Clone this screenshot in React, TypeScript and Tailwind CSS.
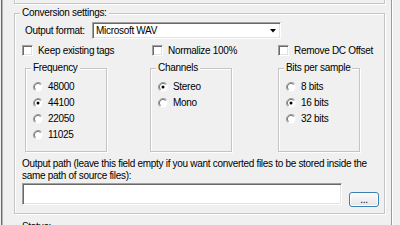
import React from 'react';

// Classic Win32 look: etched group boxes, sunken edits, 3D radios
const etched = 'border border-[#c4c4c4] shadow-[inset_1px_1px_0_#fff,1px_1px_0_#fff]';
const sunken =
  'border border-t-[#a0a0a0] border-l-[#a0a0a0] border-r-white border-b-white shadow-[inset_1px_1px_0_#696969,inset_-1px_-1px_0_#e3e3e3] bg-white';

function GroupLabel({ text }: { text: string }) {
  return (
    <div className="-mt-[7px] ml-[5px] self-start bg-[#f0f0f0] px-[2px] leading-[12px]">{text}</div>
  );
}

function Radio({ checked = false }: { checked?: boolean }) {
  return (
    <svg width="10" height="10" viewBox="0 0 10 10" className="shrink-0">
      <circle cx="5" cy="5" r="4.5" fill="#fff" />
      <path d="M8.5 1.8 A4.5 4.5 0 0 0 1.8 8.5" stroke="#a0a0a0" fill="none" />
      <path d="M7.6 2.4 A3.5 3.5 0 0 0 2.4 7.6" stroke="#696969" fill="none" />
      {checked && <circle cx="5" cy="5" r="1.5" fill="#000" />}
    </svg>
  );
}

function RadioRow({ label, checked }: { label: string; checked?: boolean }) {
  return (
    <div className="flex h-[16px] items-center gap-[5px] pl-[7px]">
      <Radio checked={checked} />
      <span className="leading-[12px]">{label}</span>
    </div>
  );
}

function Check({ label, width }: { label: string; width: string }) {
  return (
    <div className={`flex h-[11px] items-center gap-[5px] ${width}`}>
      <div className={`h-[11px] w-[11px] shrink-0 ${sunken}`} />
      <span className="leading-[12px]">{label}</span>
    </div>
  );
}

function OptionGroup({
  title,
  options,
  selected,
  className = '',
}: {
  title: string;
  options: string[];
  selected: string;
  className?: string;
}) {
  return (
    <div className={`flex h-[84px] w-[82px] flex-col ${etched} ${className}`}>
      <GroupLabel text={title} />
      <div className="mt-[5px] flex flex-col">
        {options.map((o) => (
          <RadioRow key={o} label={o} checked={o === selected} />
        ))}
      </div>
    </div>
  );
}

export default function App() {
  return (
    <div className="flex h-[225px] w-[400px] overflow-hidden bg-[#f0f0f0] font-['Liberation_Sans',Arial,sans-serif] text-[10px] tracking-[-0.3px] text-black">
      {/* left window edge */}
      <div className="flex w-[14px] shrink-0">
        <div className="ml-px w-px bg-[#6a6a6a]" />
        <div className="w-px bg-[#b4b4b4]" />
      </div>

      <div className="flex w-[371px] shrink-0 flex-col">
        {/* bottom of the previous group */}
        <div className={`-mt-[20px] h-[24px] shrink-0 ${etched}`} />

        {/* Conversion settings */}
        <div className={`mt-[9px] flex h-[201px] shrink-0 flex-col ${etched}`}>
          <GroupLabel text="Conversion settings:" />

          <div className="mt-[3px] flex h-[17px] items-center">
            <span className="ml-[10px] w-[67px] leading-[12px]">Output format:</span>
            <div className={`flex h-[17px] w-[189px] items-center ${sunken}`}>
              <span className="flex-1 pl-[3px] leading-[12px]">Microsoft WAV</span>
              <svg width="6" height="4" viewBox="0 0 6 4" className="mr-[4px]">
                <path d="M0 0H6L3 3.5Z" fill="#000" />
              </svg>
            </div>
          </div>

          <div className="mt-[6px] flex pl-[7px]">
            <Check label="Keep existing tags" width="w-[130px]" />
            <Check label="Normalize 100%" width="w-[126px]" />
            <Check label="Remove DC Offset" width="w-[100px]" />
          </div>

          <div className="mt-[12px] flex">
            <OptionGroup
              title="Frequency"
              options={['48000', '44100', '22050', '11025']}
              selected="44100"
              className="ml-[10px]"
            />
            <OptionGroup title="Channels" options={['Stereo', 'Mono']} selected="Stereo" className="ml-[43px]" />
            <OptionGroup
              title="Bits per sample"
              options={['8 bits', '16 bits', '32 bits']}
              selected="16 bits"
              className="ml-[46px]"
            />
          </div>

          <p className="mt-[6px] pl-[7px] pr-[6px] leading-[12px]">
            Output path (leave this field empty if you want converted files to be stored inside the same path of
            source files):
          </p>

          <div className="mt-px flex items-start pl-[7px]">
            <div className={`h-[22px] w-[320px] ${sunken}`} />
            <button className="ml-[7px] mt-[9px] flex h-[15px] w-[30px] items-end justify-center rounded-[3px] border border-[#3c7fb1] bg-linear-to-b from-[#fbfbfb] to-[#e6e6e6] pb-px leading-[10px] shadow-[inset_0_0_0_1px_#fff]">
              ...
            </button>
          </div>
        </div>

        {/* Status group, cut off by the window */}
        <div className={`mt-[13px] flex h-[40px] shrink-0 flex-col ${etched}`}>
          <GroupLabel text="Status:" />
        </div>
      </div>

      {/* right window edge */}
      <div className="flex w-[15px] shrink-0">
        <div className="ml-[6px] w-px bg-[#9a9a9a]" />
        <div className="w-px bg-white" />
      </div>
    </div>
  );
}
